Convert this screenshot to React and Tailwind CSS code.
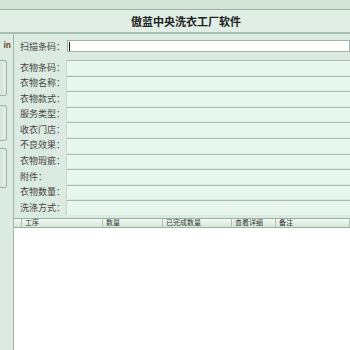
import React from "react";

const labels = ["衣物条码：", "衣物名称：", "衣物款式：", "服务类型：", "收衣门店：", "不良效果：", "衣物瑕疵：", "附件：", "衣物数量：", "洗涤方式："];
const cols = [
  { t: "", w: "w-[8px]" },
  { t: "工序", w: "w-[81px]" },
  { t: "数量", w: "w-[60px]" },
  { t: "已完成数量", w: "w-[69px]" },
  { t: "查看详细", w: "w-[44px]" },
  { t: "备注", w: "flex-1" },
];

export default function App() {
  return (
    <div className="w-[350px] h-[350px] overflow-hidden flex flex-col bg-[#dcebe1] text-[#333] [font-family:'Noto_Sans_CJK_SC','Noto_Sans',sans-serif]">
      <div className="h-[10px] shrink-0 bg-[#d2e3d7] border-b border-[#98b3a1]" />
      <div className="h-[24px] shrink-0 flex items-center justify-center bg-[#e0eee5] border-b-2 border-[#a7c0b0] text-[11px] font-bold text-[#222] leading-none pl-[22px]">
        傲蓝中央洗衣工厂软件
      </div>
      <div className="flex-1 flex min-h-0">
        <div className="w-[14px] shrink-0 border-r border-[#9fb8a7] flex flex-col bg-[#dcebe1]">
          <div className="h-[20px] flex items-center justify-end pr-[2px] mt-[1px] text-[8px] font-semibold text-[#6b4b1c] leading-none">in</div>
          <div className="mt-[5px] h-[36px] w-[7px] rounded-r-[3px] border border-l-0 border-[#9db3a4] bg-gradient-to-r from-[#d4e3d9] to-[#e4efe8]" />
          <div className="mt-[9px] h-[36px] w-[7px] rounded-r-[3px] border border-l-0 border-[#9db3a4] bg-gradient-to-r from-[#d4e3d9] to-[#e4efe8]" />
          <div className="mt-[7px] h-[40px] w-[7px] rounded-r-[3px] border border-l-0 border-[#9db3a4] bg-gradient-to-r from-[#d4e3d9] to-[#e4efe8]" />
        </div>
        <div className="flex-1 flex flex-col min-w-0">
          <div className="pl-[6px] pt-[6px] flex flex-col">
            <div className="flex items-center h-[12px]">
              <div className="w-[47px] text-[9px] leading-none text-[#444]">扫描条码：</div>
              <div className="flex-1 h-[12px] bg-white border border-[#9fb6a7] flex items-center pl-[1px]">
                <div className="w-px h-[9px] bg-[#111]" />
              </div>
            </div>
            <div className="mt-[8px] flex flex-col">
              {labels.map((l) => (
                <div key={l} className="flex h-[15.6px] items-start">
                  <div className="w-[46px] h-[14px] flex items-center text-[9px] leading-none text-[#444]">{l}</div>
                  <div className="flex-1 h-[14.6px] bg-[#e8f7ee] border-t border-[#a8bdaf] border-l border-l-[#c5d6cb]" />
                </div>
              ))}
            </div>
          </div>
          <div className="mt-[2px] h-[10px] shrink-0 flex border-t border-b border-[#98b4a1] bg-gradient-to-b from-[#f3faf5] to-[#d3e5d8]">
            {cols.map((c, i) => (
              <div key={i} className={`${c.w} shrink-0 h-full border-r border-[#a9c2b1] flex items-center pl-[3px] text-[7px] leading-none text-[#333]`}>
                {c.t}
              </div>
            ))}
          </div>
          <div className="flex-1 bg-white" />
        </div>
      </div>
    </div>
  );
}
